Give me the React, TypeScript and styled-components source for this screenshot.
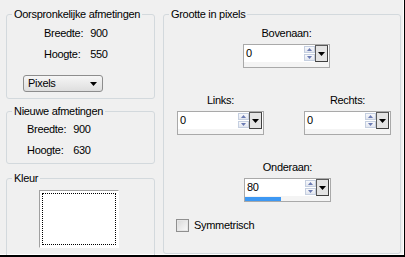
import React from 'react';
import styled, { createGlobalStyle } from 'styled-components';

const Global = createGlobalStyle`
  html, body { margin: 0; padding: 0; background: #f0f0f0; }
  body {
    font-family: "Liberation Sans", Arial, sans-serif;
    font-size: 11px;
    letter-spacing: -0.3px;
    color: #000;
  }
`;

const Window = styled.div`
  width: 405px;
  height: 257px;
  box-sizing: border-box;
  background: #f0f0f0;
  border-right: 1px solid #000;
  border-bottom: 2px solid #000;
  box-shadow: inset -1px -1px 0 #fff;
  padding: 8px 0 0 6px;
  display: grid;
  grid-template-columns: 149px 238px;
  column-gap: 8px;
  align-items: start;
  overflow: hidden;
`;

const Column = styled.div`
  display: flex;
  flex-direction: column;
`;

const Group = styled.fieldset<{ $h: number; $mt?: number }>`
  margin: ${p => p.$mt ?? 0}px 0 0 0;
  padding: 0;
  min-width: 0;
  height: ${p => p.$h}px;
  box-sizing: border-box;
  border: 1px solid #d3d9dd;
  border-radius: 3px;
`;

const Legend = styled.legend`
  margin-left: 5px;
  padding: 0 2px;
  line-height: 13px;
  white-space: nowrap;
`;

const InfoGrid = styled.div<{ $pl: number; $pt: number }>`
  display: grid;
  grid-template-columns: auto auto;
  justify-content: start;
  column-gap: 7px;
  row-gap: 8px;
  line-height: 13px;
  padding: ${p => p.$pt}px 0 0 ${p => p.$pl}px;
`;

const Select = styled.div`
  margin: 14px 0 0 16px;
  width: 80px;
  height: 17px;
  box-sizing: border-box;
  border: 1px solid #8d8d8d;
  border-radius: 3px;
  background: linear-gradient(#f6f6f6, #dedede);
  display: flex;
  align-items: center;
  justify-content: space-between;
  padding: 0 5px 0 4px;
  line-height: 13px;
`;

const ColorBox = styled.div`
  margin: 5px 0 0 32px;
  width: 80px;
  height: 58px;
  box-sizing: border-box;
  background: #fff;
  border-top: 1px solid #a0a0a0;
  border-left: 1px solid #a0a0a0;
  border-right: 1px solid #fff;
  border-bottom: 1px solid #fff;
  outline: 1px dotted #000;
  outline-offset: -4px;
`;

const RightContent = styled.div`
  display: flex;
  flex-direction: column;
`;

const Row = styled.div<{ $pl: number; $mt: number; $gap?: number }>`
  display: flex;
  gap: ${p => p.$gap ?? 0}px;
  padding-left: ${p => p.$pl}px;
  margin-top: ${p => p.$mt}px;
`;

const SpinField = styled.div`
  display: flex;
  flex-direction: column;
  align-items: center;
  gap: 4px;
  width: 87px;
`;

const SpinLabel = styled.div`
  line-height: 13px;
`;

const SpinBox = styled.div`
  width: 87px;
  height: 24px;
  box-sizing: border-box;
  border: 1px solid #a9a9a9;
  background: #f4f4f4;
  display: flex;
  flex-direction: column;
`;

const SpinTop = styled.div`
  height: 18px;
  background: #fff;
  display: flex;
  align-items: center;
`;

const SpinValue = styled.div`
  flex: 1;
  padding-left: 2px;
  line-height: 13px;
`;

const Arrows = styled.div`
  width: 11px;
  display: flex;
  flex-direction: column;
  gap: 1px;
`;

const ArrowBtn = styled.div`
  height: 7px;
  box-sizing: border-box;
  border: 1px solid #c5cfe0;
  background: linear-gradient(#f8f9fc, #e2e6ef);
  display: flex;
  align-items: center;
  justify-content: center;
`;

const DropBtn = styled.div`
  width: 13px;
  height: 17px;
  box-sizing: border-box;
  border: 1px solid #5a5a5a;
  border-right-color: #404040;
  border-bottom-color: #404040;
  background: #e4e4e4;
  display: flex;
  align-items: center;
  justify-content: center;
  margin-right: 1px;
`;

const Strip = styled.div`
  height: 4px;
  margin-top: 1px;
`;

const Bar = styled.div`
  height: 4px;
  background: #3d98f3;
`;

const CheckRow = styled.label`
  display: flex;
  align-items: center;
  gap: 5px;
  padding-left: 12px;
  margin-top: 17px;
  line-height: 13px;
`;

const CheckBox = styled.span`
  width: 13px;
  height: 13px;
  box-sizing: border-box;
  border: 1px solid #8f8f8f;
  background: linear-gradient(135deg, #d8d8d8, #fbfbfb);
  box-shadow: inset 0 0 0 1px #e6e6e6;
`;

const Down = ({ w = 7, h = 4, c = '#000' }: { w?: number; h?: number; c?: string }) => (
  <svg width={w} height={h} viewBox={`0 0 ${w} ${h}`}>
    <polygon points={`0,0 ${w},0 ${w / 2},${h}`} fill={c} />
  </svg>
);

const Up = ({ w = 5, h = 3, c = '#6b7bb3' }: { w?: number; h?: number; c?: string }) => (
  <svg width={w} height={h} viewBox={`0 0 ${w} ${h}`}>
    <polygon points={`0,${h} ${w},${h} ${w / 2},0`} fill={c} />
  </svg>
);

const Spin = ({ label, value, progress }: { label: string; value: string; progress?: number }) => (
  <SpinField>
    <SpinLabel>{label}</SpinLabel>
    <SpinBox>
      <SpinTop>
        <SpinValue>{value}</SpinValue>
        <Arrows>
          <ArrowBtn><Up /></ArrowBtn>
          <ArrowBtn><Down w={5} h={3} c="#6b7bb3" /></ArrowBtn>
        </Arrows>
        <DropBtn><Down /></DropBtn>
      </SpinTop>
      <Strip>{progress ? <Bar style={{ width: `${progress}%` }} /> : null}</Strip>
    </SpinBox>
  </SpinField>
);

export default function App() {
  return (
    <>
      <Global />
      <Window>
        <Column>
          <Group $h={91}>
            <Legend>Oorspronkelijke afmetingen</Legend>
            <InfoGrid $pl={37} $pt={6}>
              <span>Breedte:</span><span>900</span>
              <span>Hoogte:</span><span>550</span>
            </InfoGrid>
            <Select>
              <span>Pixels</span>
              <Down />
            </Select>
          </Group>
          <Group $h={59} $mt={6}>
            <Legend>Nieuwe afmetingen</Legend>
            <InfoGrid $pl={20} $pt={5}>
              <span>Breedte:</span><span>900</span>
              <span>Hoogte:</span><span>630</span>
            </InfoGrid>
          </Group>
          <Group $h={90} $mt={8}>
            <Legend>Kleur</Legend>
            <ColorBox />
          </Group>
        </Column>
        <Group $h={246}>
          <Legend>Grootte in pixels</Legend>
          <RightContent>
            <Row $pl={79} $mt={6}>
              <Spin label="Bovenaan:" value="0" />
            </Row>
            <Row $pl={13} $mt={26} $gap={40}>
              <Spin label="Links:" value="0" />
              <Spin label="Rechts:" value="0" />
            </Row>
            <Row $pl={80} $mt={26}>
              <Spin label="Onderaan:" value="80" progress={42} />
            </Row>
            <CheckRow>
              <CheckBox />
              <span>Symmetrisch</span>
            </CheckRow>
          </RightContent>
        </Group>
      </Window>
    </>
  );
}
